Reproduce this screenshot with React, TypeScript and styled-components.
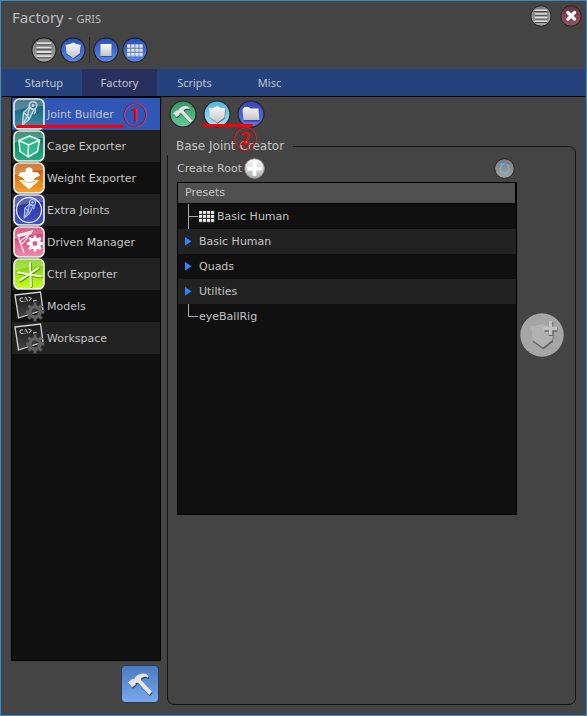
import React, { useState } from "react";
import styled, { createGlobalStyle } from "styled-components";

const uiFont = `"DejaVu Sans", Verdana, sans-serif`;
const titleFont = `"Noto Sans", "Open Sans", sans-serif`;

const GlobalStyle = createGlobalStyle`
  * { box-sizing: border-box; }
  body { margin: 0; background: #444; }
  button { font: inherit; color: inherit; border: 0; padding: 0; background: none; cursor: pointer; }
  svg { display: block; }
`;

const Window = styled.div`
  min-height: 100vh;
  display: flex;
  flex-direction: column;
  border: 1px solid #3a87d4;
  background: #444;
  color: #c4c4c4;
  font-family: ${uiFont};
  font-size: 11px;
`;

const TitleBar = styled.header`
  display: flex;
  align-items: center;
  height: 34px;
  padding: 0 4px 0 11px;
`;

const Title = styled.h1`
  flex: 1;
  margin: 0;
  font: 400 15px/22px ${titleFont};
  color: #bdbdbd;
`;

const SubTitle = styled.span`
  font-size: 11px;
`;

const WindowButtons = styled.div`
  display: flex;
  align-self: flex-start;
  gap: 8px;
  height: 30px;
  align-items: center;
`;

const QuickBar = styled.div`
  display: flex;
  align-items: center;
  height: 34px;
  padding: 0 0 4px 30px;
  gap: 3px;
`;

const Separator = styled.span`
  width: 1px;
  height: 26px;
  background: #2a2a2a;
`;

const RoundButton = styled.button<{ $size: number }>`
  width: ${(p) => p.$size}px;
  height: ${(p) => p.$size}px;
  flex: none;
  border-radius: 50%;
`;

const TabBar = styled.nav`
  display: flex;
  height: 28px;
  margin: 0 1px;
  background: #25427c;
  border-bottom: 1px solid #000;
`;

const Tab = styled.button<{ $active: boolean }>`
  min-width: 75px;
  padding: 1px 16px 0;
  font: 400 11px/26px ${titleFont};
  color: #c2c5cb;
  background: ${(p) => (p.$active ? "#27305e" : "transparent")};

  &:first-child {
    min-width: 80px;
    padding-left: 20px;
  }
`;

const Body = styled.div`
  flex: 1;
  display: grid;
  grid-template-columns: 150px minmax(0, 1fr);
  gap: 6px;
  padding: 0 10px 10px;
`;

const Sidebar = styled.aside`
  display: flex;
  flex-direction: column;
`;

const ToolList = styled.ul`
  flex: 1;
  margin: 0;
  padding: 0;
  list-style: none;
  border: 1px solid #000;
  background: #101010;
`;

const ToolRow = styled.li<{ $active: boolean }>`
  position: relative;
  background: ${(p) => (p.$active ? "#3057b5" : "transparent")};

  &:nth-child(even) {
    background: ${(p) => (p.$active ? "#3057b5" : "#222")};
  }
`;

const ToolButton = styled.button`
  display: flex;
  align-items: center;
  gap: 2px;
  width: 100%;
  height: 32px;
  padding-left: 1px;
  text-align: left;
`;

const SidebarFooter = styled.div`
  display: flex;
  justify-content: flex-end;
  padding: 4px 2px 2px;
`;

const BuildButton = styled.button`
  display: grid;
  place-items: center;
  width: 38px;
  height: 38px;
  border: 1px solid #2f3b50;
  border-radius: 4px;
  background: linear-gradient(#4b7abf, #78a8ee);
`;

const Main = styled.main`
  display: flex;
  flex-direction: column;
`;

const ToolBar = styled.div`
  position: relative;
  display: flex;
  gap: 6px;
  height: 41px;
  padding: 3px 2px;
`;

const Group = styled.fieldset`
  flex: 1;
  min-width: 0;
  margin: 0;
  padding: 0 11px 10px 9px;
  border: 1px solid #141414;
  border-radius: 7px;
`;

const Legend = styled.legend`
  margin-left: -10px;
  padding: 0 9px;
  font-size: 12px;
  line-height: 17px;
  background: #444;
`;

const GroupRow = styled.div`
  display: flex;
  align-items: center;
  gap: 3px;
`;

const Creator = styled.div`
  flex: 1;
  min-width: 0;
`;

const CreateRow = styled.div`
  display: flex;
  align-items: center;
  gap: 2px;
  height: 27px;
  padding-right: 2px;
`;

const Spacer = styled.span`
  flex: 1;
`;

const Tree = styled.div`
  min-height: 333px;
  border: 1px solid #000;
  background: #101010;
`;

const TreeHeader = styled.div`
  height: 21px;
  padding-left: 7px;
  line-height: 20px;
  background: #505050;
  border-bottom: 1px solid #000;
  border-right: 1px solid #000;
`;

const TreeList = styled.ul`
  margin: 0;
  padding: 0;
  list-style: none;
`;

const TreeItem = styled.li`
  &:nth-child(even) {
    background: #222;
  }
`;

const TreeButton = styled.button`
  display: flex;
  align-items: center;
  width: 100%;
  height: 25px;
  text-align: left;
`;

const GridGlyph = styled.span`
  width: 18px;
`;

const UnderlineMark = styled.span<{ $x: number; $y: number; $w: number }>`
  position: absolute;
  left: ${(p) => p.$x}px;
  top: ${(p) => p.$y}px;
  width: ${(p) => p.$w}px;
  height: 3px;
  border-radius: 2px;
  background: #f80008;
  pointer-events: none;
`;

const StepMark = styled.span<{ $x: number; $y: number }>`
  position: absolute;
  left: ${(p) => p.$x}px;
  top: ${(p) => p.$y}px;
  font: 500 24px/24px "Noto Sans CJK JP", sans-serif;
  color: #f80008;
  pointer-events: none;
`;

const DefsHolder = styled.div`
  position: absolute;
  width: 0;
  height: 0;
  overflow: hidden;
`;

const gradients = [
  ["grey", "#777", "#a6a6a6"],
  ["blue", "#294db4", "#5788ed"],
  ["red", "#66353f", "#9a5067"],
  ["green", "#359463", "#62cd96"],
  ["cyan", "#50b3dc", "#a5e8f8"],
  ["indigo", "#3a44b4", "#5d78e8"],
  ["silver", "#f8f8f8", "#c4c4c4"],
  ["white", "#ffffff", "#aaaaaa"],
  ["teal", "#155268", "#3991ad"],
  ["emerald", "#08684f", "#2aae83"],
  ["orange", "#b94e05", "#f9a328"],
  ["navy", "#20278c", "#4456c4"],
  ["pink", "#c62e61", "#f18aac"],
  ["lime", "#72c400", "#caff25"],
  ["black", "#171717", "#444444"],
];

const Gradients = () => (
  <svg width="0" height="0" aria-hidden="true">
    <defs>
      {gradients.map(([id, from, to]) => (
        <linearGradient key={id} id={id} x1="0" y1="0" x2="0" y2="1">
          <stop offset="0" stopColor={from} />
          <stop offset="1" stopColor={to} />
        </linearGradient>
      ))}
    </defs>
  </svg>
);

type DiscProps = { size: number; fill: string; edge?: string; children: React.ReactNode };

const Disc = ({ size, fill, edge = "#242424", children }: DiscProps) => (
  <svg width={size} height={size} viewBox="0 0 28 28" aria-hidden="true">
    <circle cx="14" cy="14" r="13" fill={`url(#${fill})`} stroke={edge} strokeWidth="1.2" />
    {children}
  </svg>
);

const Bars = () => (
  <g>
    <path d="M6 8.200h16M6 12.900h16M6 17.600h16M6 22.200h16" stroke="#444" strokeWidth="1.600" />
    <path d="M6 6.700h16M6 11.400h16M6 16.100h16M6 20.700h16" stroke="#dedede" strokeWidth="2" />
  </g>
);

const shieldPath = "M6 8.200 Q10.500 8.600 14.200 6 Q17.800 8.600 22.400 8.200 L21.400 17.600 Q18.500 20 14.200 22.800 Q10 20 7 17.600Z";

const Shield = () => (
  <g>
    <path d={shieldPath} fill="#223" opacity=".55" transform="translate(.5 1)" />
    <path d={shieldPath} fill="url(#silver)" />
  </g>
);

const hammerPath = "M1 11.500 5.500 7.800 7 8.300 Q10 2.800 16 2.600 Q19.500 2.500 21.500 5 L21 6.800 Q17.500 4.600 14.200 7.600 L14.200 9.200 25 20.800 22.200 24 11.200 12 8.600 12 8.800 13.500 5.200 16.500Z";

const HammerShape = () => (
  <g>
    <path d={hammerPath} fill="#1b2836" opacity=".75" transform="translate(.6 1.200)" />
    <path d={hammerPath} fill="#e4e4e4" />
  </g>
);

const GridShape = ({ x, y, w, h }: { x: number; y: number; w: number; h: number }) => (
  <g fill="url(#silver)">
    {[0, 1, 2].map((r) =>
      [0, 1, 2, 3].map((c) => (
        <rect key={`${r}${c}`} x={x + c * w} y={y + r * h} width={w - 0.8} height={h - 0.8} />
      ))
    )}
  </g>
);

const Tile = ({ fill, children }: { fill: string; children: React.ReactNode }) => (
  <svg width="32" height="32" viewBox="0 0 32 32" aria-hidden="true">
    <rect x="1" y="1" width="30" height="30" rx="5.500" fill={`url(#${fill})`} />
    <path d="M1.500 8 Q1.500 1.500 8 1.500 H24 Q30.500 1.500 30.500 8 Q15 8 1.500 13Z" fill="#fff" opacity=".25" />
    {children}
    <rect x="1" y="1" width="30" height="30" rx="5.500" fill="none" stroke="#eef3f1" strokeWidth="1.600" />
  </svg>
);

const Bone = ({ color }: { color: string }) => (
  <g stroke={color} strokeWidth="1.400" strokeLinejoin="round" fill="none">
    <circle cx="20" cy="7.500" r="3.800" />
    <circle cx="20" cy="7.500" r=".8" />
    <path d="M16.500 9 10.500 14.500 9.500 27 16 21.500 21 11.500Z" fill={color} fillOpacity=".25" />
    <path d="M16.500 9 14.500 18 9.500 27M10.500 14.500 14.500 18 16 21.500M22 11Q23 14 21 16" />
  </g>
);

const gearPath = (cx: number, cy: number, outer: number, inner: number, teeth: number) => {
  const points: string[] = [];
  for (let i = 0; i < teeth; i++) {
    const step = (Math.PI * 2) / teeth;
    [[-0.32, inner], [-0.2, outer], [0.2, outer], [0.32, inner]].forEach(([o, r]) => {
      const a = (i + o) * step;
      points.push(`${(cx + Math.cos(a) * r).toFixed(2)} ${(cy + Math.sin(a) * r).toFixed(2)}`);
    });
  }
  return `M${points.join("L")}Z`;
};

const JointIcon = () => (
  <Tile fill="teal"><Bone color="#c3dbe4" /></Tile>
);

const CageIcon = () => (
  <Tile fill="emerald">
    <path d="M6 10.500 16.500 6 26.500 10 24.500 21.500 15 27 7 21.500Z" fill="#42c9a0" opacity=".65" />
    <path d="M6 10.500 16.500 6 26.500 10 24.500 21.500 15 27 7 21.500ZM6 10.500 15.500 15 26.500 10M15.500 15 15 27" fill="none" stroke="#e1fff4" strokeWidth="1.500" strokeLinejoin="round" />
  </Tile>
);

const WeightIcon = () => (
  <Tile fill="orange">
    <path d="M12.500 8.500 Q12.500 5.500 16 5.500 Q19.500 5.500 19.500 8.500 L19.500 10 25 10.500 27 13.500 22 16 20.500 18H26.500L16 27.500 5.500 18H11.500L10 16 5 13.500 7 10.500 12.500 10Z" fill="#fff" />
    <path d="M9.500 18.500 Q16 22.500 22.500 18.500" fill="none" stroke="#f3b45e" strokeWidth="1.200" />
  </Tile>
);

const ExtraIcon = () => (
  <Tile fill="navy">
    <circle cx="16" cy="16" r="12.500" fill="none" stroke="#e0e5ff" strokeWidth="1.300" />
    <g transform="translate(3.500 2.500) scale(.8)"><Bone color="#a9c3f6" /></g>
  </Tile>
);

const DrivenIcon = () => (
  <Tile fill="pink">
    <path d="M4.500 9 20 5M5 10.500 19 7M5 9.500 11 27M6 16 18 7M8 18 Q12.500 16 15 10" fill="none" stroke="#fff1f5" strokeWidth="1.300" />
    <path d={`${gearPath(22, 17.5, 8.2, 6, 8)}M24.500 17.500a2.500 2.500 0 1 0-5 0 2.500 2.500 0 1 0 5 0Z`} fill="#fff" fillRule="evenodd" />
  </Tile>
);

const CtrlIcon = () => (
  <Tile fill="lime">
    <g fill="none" strokeLinecap="round">
      <path d="M17 5 18 28M5 14.500 28 18.500M25.500 10 7 22.500" stroke="#5b8b12" strokeWidth="2.200" transform="translate(.6 .8)" />
      <path d="M17 5 18 28M5 14.500 28 18.500M25.500 10 7 22.500" stroke="#f2ffe0" strokeWidth="1.800" />
    </g>
  </Tile>
);

const ConsoleIcon = () => (
  <svg width="32" height="32" viewBox="0 0 32 32" aria-hidden="true">
    <path d="M2 5 27.500 2 30 20 5.500 28Z" fill="url(#black)" stroke="#d5d5d5" strokeWidth="1.300" />
    <g fill="none" stroke="#d8d8d8" strokeWidth="1">
      <path d="M10 8 Q6.500 7 6.800 10 Q7.200 12.500 10.500 11.300M11.800 8.500v.8M12 11v.8M12.500 7 14.800 11.300M15.500 7 18.500 8.500 16 10.800M20 11 23.500 10.500" />
    </g>
    <path d={`${gearPath(22, 22, 9.5, 6.9, 8)}M25.200 22a3.200 3.200 0 1 0-6.400 0 3.200 3.200 0 1 0 6.400 0Z`} fill="#626262" stroke="#333" strokeWidth=".5" fillRule="evenodd" />
  </svg>
);

const BranchGlyph = ({ last }: { last?: boolean }) => (
  <svg width="21" height="25" viewBox="0 0 21 25" aria-hidden="true">
    <path d={last ? "M10.500 0V12.500H20" : "M10.500 0V25M10.500 12.500H20"} fill="none" stroke="#aaa" />
  </svg>
);

const ArrowGlyph = () => (
  <svg width="21" height="25" viewBox="0 0 21 25" aria-hidden="true">
    <path d="M7 8 13.500 12.300 7 16.800Z" fill="#2c85ff" />
  </svg>
);

const tools = [
  { name: "Joint Builder", Icon: JointIcon },
  { name: "Cage Exporter", Icon: CageIcon },
  { name: "Weight Exporter", Icon: WeightIcon },
  { name: "Extra Joints", Icon: ExtraIcon },
  { name: "Driven Manager", Icon: DrivenIcon },
  { name: "Ctrl Exporter", Icon: CtrlIcon },
  { name: "Models", Icon: ConsoleIcon },
  { name: "Workspace", Icon: ConsoleIcon },
];

const tabs = ["Startup", "Factory", "Scripts", "Misc"];

const presets = [
  { name: "Basic Human", kind: "grid" },
  { name: "Basic Human", kind: "folder" },
  { name: "Quads", kind: "folder" },
  { name: "Utilties", kind: "folder" },
  { name: "eyeBallRig", kind: "last" },
];

export default function App() {
  const [tab, setTab] = useState("Factory");
  const [tool, setTool] = useState("Joint Builder");

  return (
    <Window>
      <GlobalStyle />
      <DefsHolder><Gradients /></DefsHolder>
      <TitleBar>
        <Title>Factory - <SubTitle>GRIS</SubTitle></Title>
        <WindowButtons>
          <RoundButton $size={22} aria-label="Menu"><Disc size={22} fill="grey"><Bars /></Disc></RoundButton>
          <RoundButton $size={22} aria-label="Close">
            <Disc size={22} fill="red">
              <path d="M10 9.500 18.500 18M18.500 9.500 10 18" stroke="#fff" strokeWidth="4.200" strokeLinecap="round" />
            </Disc>
          </RoundButton>
        </WindowButtons>
      </TitleBar>
      <QuickBar>
        <RoundButton $size={26} aria-label="List"><Disc size={26} fill="grey"><Bars /></Disc></RoundButton>
        <RoundButton $size={26} aria-label="Shield"><Disc size={26} fill="blue"><Shield /></Disc></RoundButton>
        <Separator />
        <RoundButton $size={26} aria-label="Single view">
          <Disc size={26} fill="blue">
            <rect x="8.500" y="8.500" width="12" height="13" fill="#263761" opacity=".7" />
            <rect x="8" y="7.500" width="12" height="13" fill="url(#silver)" />
          </Disc>
        </RoundButton>
        <RoundButton $size={26} aria-label="Grid view">
          <Disc size={26} fill="blue"><GridShape x={5.5} y={8} w={4.4} h={4.6} /></Disc>
        </RoundButton>
      </QuickBar>
      <TabBar>
        {tabs.map((name) => (
          <Tab key={name} $active={name === tab} onClick={() => setTab(name)}>{name}</Tab>
        ))}
      </TabBar>
      <Body>
        <Sidebar>
          <ToolList>
            {tools.map(({ name, Icon }) => (
              <ToolRow key={name} $active={name === tool}>
                <ToolButton onClick={() => setTool(name)}><Icon />{name}</ToolButton>
                {name === "Joint Builder" && (
                  <>
                    <UnderlineMark $x={4} $y={27} $w={108} />
                    <StepMark $x={111} $y={4}>①</StepMark>
                  </>
                )}
              </ToolRow>
            ))}
          </ToolList>
          <SidebarFooter>
            <BuildButton aria-label="Build">
              <svg width="26" height="26" viewBox="0 0 26 26" aria-hidden="true"><HammerShape /></svg>
            </BuildButton>
          </SidebarFooter>
        </Sidebar>
        <Main>
          <ToolBar>
            <RoundButton $size={28} aria-label="Hammer">
              <Disc size={28} fill="green"><g transform="translate(3.500 4) scale(.8)"><HammerShape /></g></Disc>
            </RoundButton>
            <RoundButton $size={28} aria-label="Presets"><Disc size={28} fill="cyan"><Shield /></Disc></RoundButton>
            <RoundButton $size={28} aria-label="Folder">
              <Disc size={28} fill="indigo">
                <path d="M5.500 9.500 7.500 7H12L13 8.500H21.500L22.500 20.500H6.500Z" fill="#24285c" opacity=".6" transform="translate(.5 1)" />
                <path d="M5.500 9.500 7.500 7H12L13 8.500H21.500L22.500 20H6.500Z" fill="url(#silver)" />
              </Disc>
            </RoundButton>
            <UnderlineMark $x={35} $y={27} $w={51} />
            <StepMark $x={66} $y={29}>②</StepMark>
          </ToolBar>
          <Group>
            <Legend>Base Joint Creator</Legend>
            <GroupRow>
              <Creator>
                <CreateRow>
                  <span>Create Root</span>
                  <RoundButton $size={21} aria-label="Create root">
                    <Disc size={21} fill="white" edge="#999">
                      <path d="M14 4.500V23.500M4.500 14H23.500" stroke="#fff" strokeWidth="5" />
                    </Disc>
                  </RoundButton>
                  <Spacer />
                  <RoundButton $size={21} aria-label="Refresh">
                    <Disc size={21} fill="grey">
                      <path d="M9.500 10.500A6 6 0 1 0 17 9" fill="none" stroke="#76bad9" strokeWidth="1.600" />
                      <path d="M8.500 6.500 15.500 7.500 9.500 12Z" fill="#52b6f5" />
                    </Disc>
                  </RoundButton>
                </CreateRow>
                <Tree>
                  <TreeHeader>Presets</TreeHeader>
                  <TreeList>
                    {presets.map(({ name, kind }, index) => (
                      <TreeItem key={index}>
                        <TreeButton>
                          {kind === "folder" ? <ArrowGlyph /> : <BranchGlyph last={kind === "last"} />}
                          {kind === "grid" && (
                            <GridGlyph>
                              <svg width="16" height="12" viewBox="0 0 16 12" aria-hidden="true">
                                <GridShape x={0} y={0} w={4} h={4} />
                              </svg>
                            </GridGlyph>
                          )}
                          {name}
                        </TreeButton>
                      </TreeItem>
                    ))}
                  </TreeList>
                </Tree>
              </Creator>
              <RoundButton $size={44} aria-label="Add preset">
                <svg width="44" height="44" viewBox="0 0 44 44" aria-hidden="true">
                  <circle cx="22" cy="22" r="21.700" fill="#a5a5a5" />
                  <path d="M10.500 13.500 Q17 14 22.500 11 Q28 14 33.500 14 L32.500 27.500 23 35 12.500 27.500Z" fill="#666" transform="translate(.5 1.500)" />
                  <path d="M10.500 13 Q17 13.500 22.500 10.500 Q28 13.500 33.500 13.500 L32.500 27 23 34.500 12.500 27Z" fill="#b2b2b2" />
                  <path d="M31 9V23M24.500 16.500H37.500" stroke="#666" strokeWidth="4.500" />
                  <path d="M30.500 8V22M23.500 15.500H37" stroke="#c2c2c2" strokeWidth="3.500" />
                </svg>
              </RoundButton>
            </GroupRow>
          </Group>
        </Main>
      </Body>
    </Window>
  );
}
